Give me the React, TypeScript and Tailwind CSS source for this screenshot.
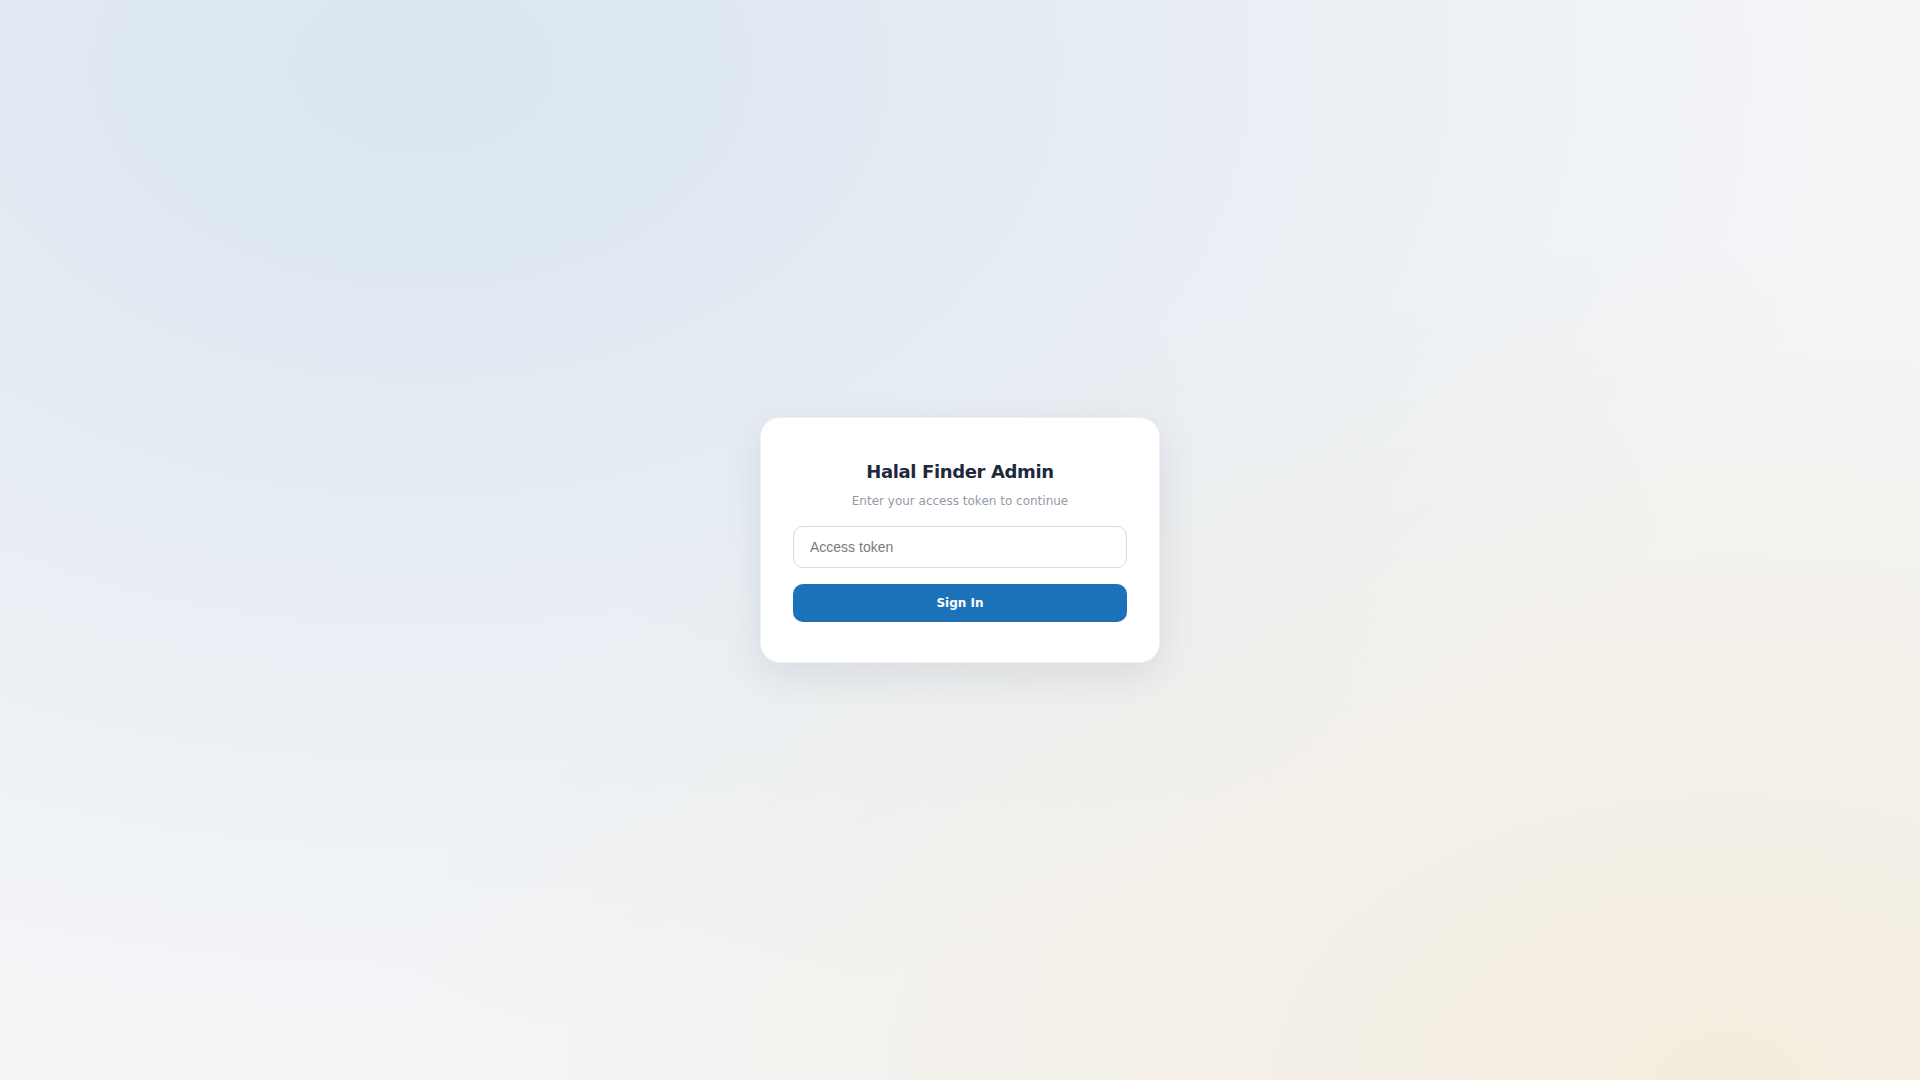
import React from "react";

export default function App() {
  return (
    <div className="min-h-screen w-full flex items-center justify-center bg-[#f4f5f7] bg-[radial-gradient(ellipse_at_22%_6%,rgba(40,125,195,0.13),transparent_68%),radial-gradient(ellipse_at_90%_100%,rgba(240,185,80,0.15),transparent_55%)] font-['DejaVu_Sans',sans-serif]">
      <div className="w-[400px] bg-white rounded-[20px] px-8 pt-10 pb-10 shadow-[0_12px_40px_rgba(15,23,42,0.09)] border border-[#eef0f3]">
        <h1 className="text-center text-[18px] leading-7 font-bold tracking-[-0.02em] text-[#1e293b]">
          Halal Finder Admin
        </h1>
        <p className="mt-[7px] text-center text-[12px] leading-4 text-[#939ba8]">
          Enter your access token to continue
        </p>
        <form className="mt-[17px] flex flex-col gap-4" onSubmit={(e) => e.preventDefault()}>
          <input
            type="password"
            placeholder="Access token"
            className="w-full h-[42px] rounded-[10px] border border-[#d5dae1] bg-white px-4 text-[14px] font-['Liberation_Sans',Arial,sans-serif] text-[#111827] placeholder:text-[#7a7a7a] outline-none"
          />
          <button
            type="submit"
            className="w-full h-[38px] rounded-[10px] bg-[#1c72b9] text-white text-[12px] font-bold"
          >
            Sign In
          </button>
        </form>
      </div>
    </div>
  );
}
